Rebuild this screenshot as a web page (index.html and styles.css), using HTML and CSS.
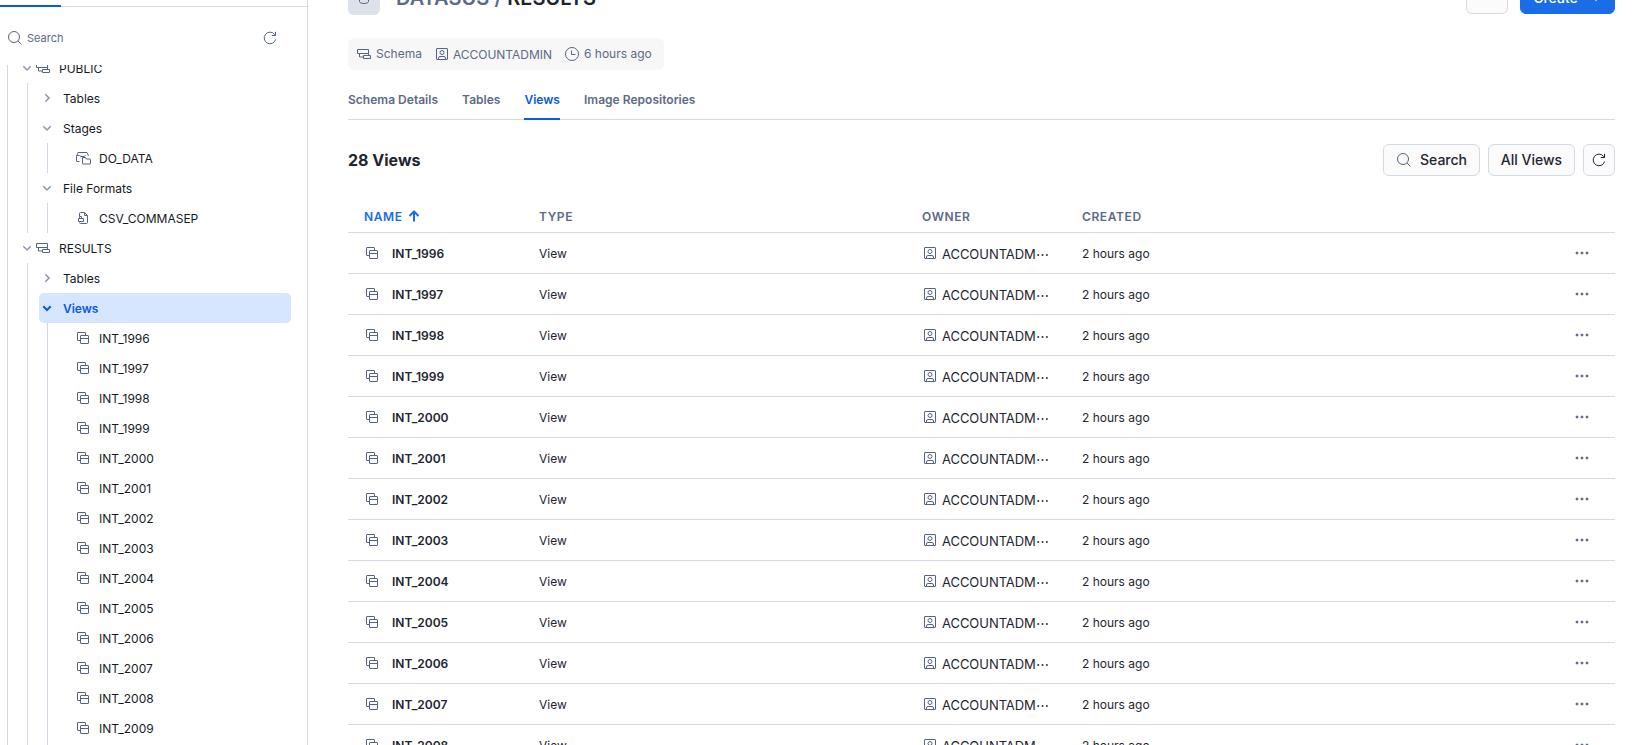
FILE: index.html
```html
<!DOCTYPE html>
<html lang="en">
<head>
<meta charset="utf-8">
<title>DATASUS / RESULTS</title>
<link rel="stylesheet" href="styles.css">
</head>
<body>
<svg class="defs" width="0" height="0" aria-hidden="true">
  <symbol id="search" viewBox="0 0 16 16"><circle cx="7" cy="7" r="5.5"/><path d="M11 11l3.500 3.500"/></symbol>
  <symbol id="refresh" viewBox="0 0 16 16"><path d="M13.600 9.500A5.800 5.800 0 1 1 12.600 4.400L13.500 5.500M13.500 1.800v3.700H9.800"/></symbol>
  <symbol id="down" viewBox="0 0 16 16"><path d="M4.300 6.300L8 10l3.700-3.700"/></symbol>
  <symbol id="right" viewBox="0 0 16 16"><path d="M6.300 4.300L10 8l-3.700 3.700"/></symbol>
  <symbol id="schema" viewBox="0 0 16 16"><path d="M1.500 3.500h11v4h-11zM7.500 9.500h7v3h-7zM3.500 7.500v3.500h4M12.500 7.500v2"/></symbol>
  <symbol id="view" viewBox="0 0 16 16"><path d="M5.500 10.500H3a.5.5 0 0 1-.5-.5V3a.5.5 0 0 1 .5-.5h7a.5.5 0 0 1 .5.5V5.500"/><rect x="5.500" y="5.500" width="8" height="8" rx=".5"/><path d="M5.500 8.500h8"/></symbol>
  <symbol id="stage" viewBox="0 0 16 16"><path d="M4.500 11.500H2a.5.5 0 0 1-.5-.5V6.500M1.500 6.500L3 2.500h9L13.500 6M1.500 5.500h3l1.500 1h3l1.500-1"/><path d="M7.500 8a.5.5 0 0 1 .5-.5h2.500l1 1.500H15a.5.5 0 0 1 .5.5v4a.5.5 0 0 1-.5.5H8a.5.5 0 0 1-.5-.5z"/></symbol>
  <symbol id="file" viewBox="0 0 16 16"><path d="M4.500 6V3.500a1 1 0 0 1 1-1h4l3 3v7a1 1 0 0 1-1 1h-6a1 1 0 0 1-1-1M9.500 2.500v3h3"/><path d="M3.500 8.500h5v3h-5zM4.500 8.500v-2h2v2"/></symbol>
  <symbol id="owner" viewBox="0 0 16 16"><rect x="2.500" y="2.500" width="11" height="11" rx=".5"/><circle cx="8" cy="6.500" r="2"/><path d="M4.500 13.500v-1.500a1.500 1.500 0 0 1 1.500-1.500h4a1.500 1.500 0 0 1 1.500 1.500v1.500"/></symbol>
  <symbol id="clock" viewBox="0 0 16 16"><circle cx="8" cy="8" r="6.500"/><path d="M7.500 4.500v4h4"/></symbol>
  <symbol id="up" viewBox="0 0 16 16"><path d="M8 13.500V3.500M3.500 8L8 3.500 12.500 8"/></symbol>
  <symbol id="dots" viewBox="0 0 16 16"><circle cx="3" cy="8" r="1"/><circle cx="8" cy="8" r="1"/><circle cx="13" cy="8" r="1"/></symbol>
  <symbol id="database" viewBox="0 0 16 16"><path d="M3.500 2v8.500c0 1.100 2 2 4.500 2s4.500-.9 4.500-2V2"/></symbol>
</svg>
<div class="app">
  <aside class="sidebar">
    <div class="sidebar-tabs"><span class="sidebar-tab"></span></div>
    <div class="sidebar-search">
      <svg class="icon"><use href="#search"/></svg><span class="placeholder">Search</span><svg class="icon"><use href="#refresh"/></svg>
    </div>
    <div class="tree">
      <div class="tree-scroll">
        <div class="node schema"><svg class="icon chev"><use href="#down"/></svg><svg class="icon"><use href="#schema"/></svg><span>PUBLIC</span></div>
        <div class="branch">
          <div class="node group"><svg class="icon chev"><use href="#right"/></svg><span>Tables</span></div>
          <div class="node group"><svg class="icon chev"><use href="#down"/></svg><span>Stages</span></div>
          <div class="branch"><div class="node leaf"><svg class="icon"><use href="#stage"/></svg><span>DO_DATA</span></div></div>
          <div class="node group"><svg class="icon chev"><use href="#down"/></svg><span>File Formats</span></div>
          <div class="branch"><div class="node leaf"><svg class="icon"><use href="#file"/></svg><span>CSV_COMMASEP</span></div></div>
        </div>
        <div class="node schema"><svg class="icon chev"><use href="#down"/></svg><svg class="icon"><use href="#schema"/></svg><span>RESULTS</span></div>
        <div class="branch">
          <div class="node group"><svg class="icon chev"><use href="#right"/></svg><span>Tables</span></div>
          <div class="node group selected"><svg class="icon chev"><use href="#down"/></svg><span>Views</span></div>
          <div class="branch">
            <div class="node leaf"><svg class="icon"><use href="#view"/></svg><span>INT_1996</span></div>
            <div class="node leaf"><svg class="icon"><use href="#view"/></svg><span>INT_1997</span></div>
            <div class="node leaf"><svg class="icon"><use href="#view"/></svg><span>INT_1998</span></div>
            <div class="node leaf"><svg class="icon"><use href="#view"/></svg><span>INT_1999</span></div>
            <div class="node leaf"><svg class="icon"><use href="#view"/></svg><span>INT_2000</span></div>
            <div class="node leaf"><svg class="icon"><use href="#view"/></svg><span>INT_2001</span></div>
            <div class="node leaf"><svg class="icon"><use href="#view"/></svg><span>INT_2002</span></div>
            <div class="node leaf"><svg class="icon"><use href="#view"/></svg><span>INT_2003</span></div>
            <div class="node leaf"><svg class="icon"><use href="#view"/></svg><span>INT_2004</span></div>
            <div class="node leaf"><svg class="icon"><use href="#view"/></svg><span>INT_2005</span></div>
            <div class="node leaf"><svg class="icon"><use href="#view"/></svg><span>INT_2006</span></div>
            <div class="node leaf"><svg class="icon"><use href="#view"/></svg><span>INT_2007</span></div>
            <div class="node leaf"><svg class="icon"><use href="#view"/></svg><span>INT_2008</span></div>
            <div class="node leaf"><svg class="icon"><use href="#view"/></svg><span>INT_2009</span></div>
            <div class="node"></div>
          </div>
        </div>
      </div>
    </div>
  </aside>
  <main class="main">
    <header class="page-head">
      <div class="crumb-icon"><svg class="icon"><use href="#database"/></svg></div>
      <h1 class="crumbs"><span class="parent">DATASUS /</span> RESULTS</h1>
      <div class="head-actions"><button class="btn more"></button><button class="btn create">Create<svg class="icon"><use href="#down"/></svg></button></div>
    </header>
    <div class="meta">
      <svg class="icon"><use href="#schema"/></svg><span class="meta-schema">Schema</span>
      <svg class="icon"><use href="#owner"/></svg><span class="meta-owner">ACCOUNTADMIN</span>
      <svg class="icon"><use href="#clock"/></svg><span class="meta-time">6 hours ago</span>
    </div>
    <nav class="tabs"><a class="tab">Schema Details</a><a class="tab">Tables</a><a class="tab active">Views</a><a class="tab">Image Repositories</a></nav>
    <div class="toolbar">
      <h2 class="count">28 Views</h2>
      <button class="btn search"><svg class="icon"><use href="#search"/></svg>Search</button>
      <button class="btn filter">All Views</button>
      <button class="btn reload"><svg class="icon"><use href="#refresh"/></svg></button>
    </div>
    <div class="row row-head"><span class="sorted">NAME<svg class="icon"><use href="#up"/></svg></span><span>TYPE</span><span>OWNER</span><span>CREATED</span></div>
    <div class="row"><span class="name"><svg class="icon"><use href="#view"/></svg>INT_1996</span><span>View</span><span class="owner"><svg class="icon"><use href="#owner"/></svg><span>ACCOUNTADM⋯</span></span><span>2 hours ago</span><svg class="icon dots"><use href="#dots"/></svg></div>
    <div class="row"><span class="name"><svg class="icon"><use href="#view"/></svg>INT_1997</span><span>View</span><span class="owner"><svg class="icon"><use href="#owner"/></svg><span>ACCOUNTADM⋯</span></span><span>2 hours ago</span><svg class="icon dots"><use href="#dots"/></svg></div>
    <div class="row"><span class="name"><svg class="icon"><use href="#view"/></svg>INT_1998</span><span>View</span><span class="owner"><svg class="icon"><use href="#owner"/></svg><span>ACCOUNTADM⋯</span></span><span>2 hours ago</span><svg class="icon dots"><use href="#dots"/></svg></div>
    <div class="row"><span class="name"><svg class="icon"><use href="#view"/></svg>INT_1999</span><span>View</span><span class="owner"><svg class="icon"><use href="#owner"/></svg><span>ACCOUNTADM⋯</span></span><span>2 hours ago</span><svg class="icon dots"><use href="#dots"/></svg></div>
    <div class="row"><span class="name"><svg class="icon"><use href="#view"/></svg>INT_2000</span><span>View</span><span class="owner"><svg class="icon"><use href="#owner"/></svg><span>ACCOUNTADM⋯</span></span><span>2 hours ago</span><svg class="icon dots"><use href="#dots"/></svg></div>
    <div class="row"><span class="name"><svg class="icon"><use href="#view"/></svg>INT_2001</span><span>View</span><span class="owner"><svg class="icon"><use href="#owner"/></svg><span>ACCOUNTADM⋯</span></span><span>2 hours ago</span><svg class="icon dots"><use href="#dots"/></svg></div>
    <div class="row"><span class="name"><svg class="icon"><use href="#view"/></svg>INT_2002</span><span>View</span><span class="owner"><svg class="icon"><use href="#owner"/></svg><span>ACCOUNTADM⋯</span></span><span>2 hours ago</span><svg class="icon dots"><use href="#dots"/></svg></div>
    <div class="row"><span class="name"><svg class="icon"><use href="#view"/></svg>INT_2003</span><span>View</span><span class="owner"><svg class="icon"><use href="#owner"/></svg><span>ACCOUNTADM⋯</span></span><span>2 hours ago</span><svg class="icon dots"><use href="#dots"/></svg></div>
    <div class="row"><span class="name"><svg class="icon"><use href="#view"/></svg>INT_2004</span><span>View</span><span class="owner"><svg class="icon"><use href="#owner"/></svg><span>ACCOUNTADM⋯</span></span><span>2 hours ago</span><svg class="icon dots"><use href="#dots"/></svg></div>
    <div class="row"><span class="name"><svg class="icon"><use href="#view"/></svg>INT_2005</span><span>View</span><span class="owner"><svg class="icon"><use href="#owner"/></svg><span>ACCOUNTADM⋯</span></span><span>2 hours ago</span><svg class="icon dots"><use href="#dots"/></svg></div>
    <div class="row"><span class="name"><svg class="icon"><use href="#view"/></svg>INT_2006</span><span>View</span><span class="owner"><svg class="icon"><use href="#owner"/></svg><span>ACCOUNTADM⋯</span></span><span>2 hours ago</span><svg class="icon dots"><use href="#dots"/></svg></div>
    <div class="row"><span class="name"><svg class="icon"><use href="#view"/></svg>INT_2007</span><span>View</span><span class="owner"><svg class="icon"><use href="#owner"/></svg><span>ACCOUNTADM⋯</span></span><span>2 hours ago</span><svg class="icon dots"><use href="#dots"/></svg></div>
    <div class="row"><span class="name"><svg class="icon"><use href="#view"/></svg>INT_2008</span><span>View</span><span class="owner"><svg class="icon"><use href="#owner"/></svg><span>ACCOUNTADM⋯</span></span><span>2 hours ago</span><svg class="icon dots"><use href="#dots"/></svg></div>
  </main>
</div>
</body>
</html>
```
FILE: styles.css
```css
* { box-sizing: border-box; }
body { margin: 0; background: #fff; font-family: Inter, "Liberation Sans", sans-serif; font-size: 12px; color: #1e252f; }
.defs { position: absolute; }
.app { display: grid; grid-template-columns: 308px 1fr; height: 745px; overflow: hidden; }
.icon { width: 16px; height: 16px; flex: none; fill: none; stroke: #56637e; stroke-width: 1; }

.sidebar { display: flex; flex-direction: column; min-height: 0; border-right: 1px solid #d5dae4; }
.sidebar-tabs { height: 7px; border-bottom: 1px solid #d5dae4; display: flex; align-items: flex-end; flex: none; }
.sidebar-tab { width: 61px; height: 2px; margin-bottom: -1px; background: #0b5adb; }
.sidebar-search { height: 58px; flex: none; display: flex; align-items: center; padding: 4px 29px 0 7px; font-size: 11px; color: #5d6a85; }
.placeholder { flex: 1; padding-left: 4px; }
.tree { flex: 1; overflow: hidden; padding-left: 7px; color: #141a24; }
.tree-scroll { margin-top: -12px; border-left: 1px solid #d5d8e4; }
.node { height: 30px; display: flex; align-items: center; }
.branch { margin-left: 19px; border-left: 1px solid #d5d8e4; }
.branch .branch { margin-left: 19px; }
.chev { stroke: #8a96ad; stroke-width: 1.5; }
.schema { padding-left: 11px; }
.schema span { padding-left: 8px; }
.group { margin-left: 11px; margin-right: 16px; border-radius: 5px; }
.group span { padding-left: 8px; }
.selected { background: #d6e6ff; color: #0b5adb; font-weight: 600; }
.selected .chev { stroke: #0b5adb; stroke-width: 2; }
.leaf { padding-left: 27px; }
.leaf span { padding-left: 8px; }

.main { padding: 0 21px 0 40px; min-width: 0; display: flex; flex-direction: column; }
.main > * { flex: none; }
.page-head { height: 32px; margin-top: -18px; display: flex; align-items: center; }
.crumb-icon { width: 32px; height: 32px; margin-top: 2px; border-radius: 6px; background: #dde2ea; display: flex; align-items: center; justify-content: center; }
.crumbs { margin: 0 0 0 16px; font-size: 20px; line-height: 24px; font-weight: 600; letter-spacing: .05px; flex: 1; }
.parent { color: #5d6a85; }
.head-actions { display: flex; gap: 12px; }
.btn { height: 32px; border: 1px solid #d5dae4; border-radius: 6px; background: #fbfbfb; padding: 0 0 1px; font: 500 14px Inter, sans-serif; color: #1e252f; display: flex; align-items: center; justify-content: center; }
.more { width: 42px; }
.create { width: 95px; background: #1a6ce7; border-color: #1a6ce7; color: #fff; gap: 10px; padding-left: 2px; }
.create .icon { stroke: #fff; stroke-width: 1.5; }
.meta { align-self: flex-start; width: 316px; height: 32px; margin-top: 24px; padding-left: 8px; border-radius: 6px; background: #f7f7f7; display: flex; align-items: center; color: #5d6a85; }
.meta span { padding-bottom: 1px; }
.meta-schema { width: 54px; margin-left: 4px; margin-right: 4px; }
.meta .meta-owner { width: 107px; margin-left: 3px; padding: 1px 0 0; margin-right: 4px; letter-spacing: -.03px; }
.meta-time { margin-left: 4px; }
.tabs { height: 50px; border-bottom: 1px solid #d5dae4; display: flex; gap: 24px; font-weight: 600; letter-spacing: .02px; color: #5d6a85; }
.tab { height: 50px; padding-top: 22px; line-height: 16px; }
.active { color: #0b5adb; border-bottom: 2px solid #0b5adb; }
.toolbar { height: 80px; display: flex; align-items: center; gap: 8px; }
.count { margin: 0; flex: 1; font-size: 16px; font-weight: 700; }
.search { width: 97px; gap: 8px; }
.filter { width: 87px; }
.reload { width: 32px; padding: 0; }
.reload .icon { stroke: #1e252f; }
.row { height: 41px; border-bottom: 1px solid #d5dae4; display: grid; grid-template-columns: 175px 383px 160px 1fr 16px; align-items: center; padding: 0 25px 0 16px; }
.row-head { height: 33px; font-weight: 600; letter-spacing: .6px; color: #5d6a85; }
.sorted { display: flex; align-items: center; gap: 3px; color: #1a6ce7; }
.sorted .icon { stroke: #1a6ce7; stroke-width: 2; }
.name { display: flex; align-items: center; gap: 12px; font-weight: 600; }
.owner { display: flex; align-items: center; gap: 4px; font-size: 13px; letter-spacing: -.05px; }
.owner span { padding-top: 2px; }
.dots { fill: #5d6a85; }
```
